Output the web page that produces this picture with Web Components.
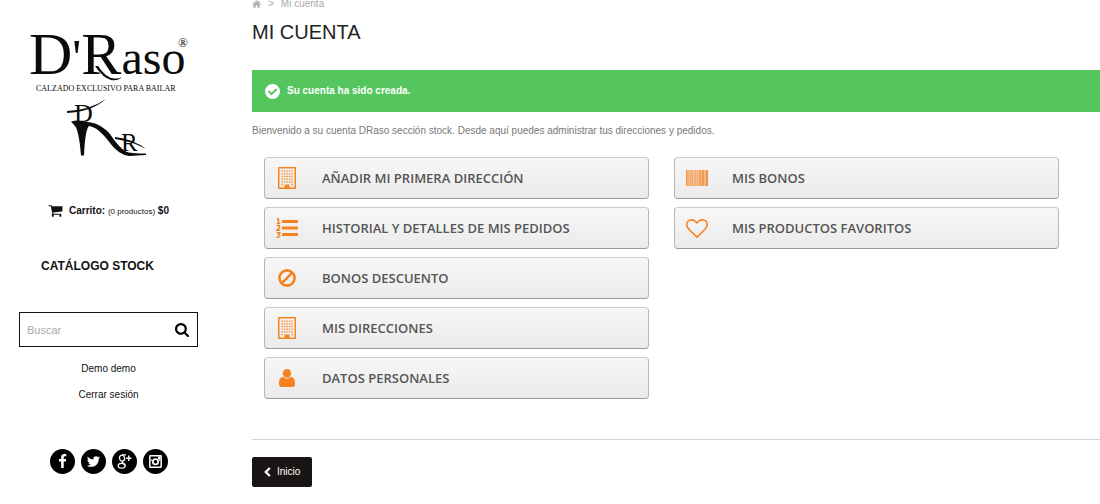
<!DOCTYPE html>
<html lang="es">
<head>
<meta charset="utf-8">
<meta name="viewport" content="width=device-width, initial-scale=1">
<title>Mi cuenta - D'Raso</title>
<style>
body { margin: 0; background: #fff; color: #777; font: 10px/16px "Liberation Sans", Arial, sans-serif; }
</style>
</head>
<body>
<account-page></account-page>
<script>
const define = (name, html, setup) => customElements.define(name, class extends HTMLElement {
  constructor() {
    super();
    this.attachShadow({ mode: 'open' }).innerHTML = html;
  }
  connectedCallback() { if (setup) setup(this, this.shadowRoot); }
});

let windows = '';
for (let y = 0; y < 6; y++) for (let x = 0; x < 5; x++) {
  if (y < 5 || x === 0 || x === 4) windows += `<rect x="${3.4 + x * 2.5}" y="${3.4 + y * 2.7}" width="1.3" height="1.4"/>`;
}
const ICONS = {
  home: ['0 0 20 18', '<path d="M10 4 3 10v6.500q0 .8.8.8H8V12h4v5.300h4.200q.8 0 .8-.8V10Z"/><path d="M10 .8 17 7V2h-2.500v2.500L11 1.200q-1-.8-2 0L0 9.300l1.200 1.300L10 3l8.800 7.600L20 9.300 17 6.600"/>'],
  cart: ['0 128 1792 1536', '<path d="M704 1536q0 52-38 90t-90 38-90-38-38-90 38-90 90-38 90 38 38 90zm896 0q0 52-38 90t-90 38-90-38-38-90 38-90 90-38 90 38 38 90zm128-1088v512q0 24-16.500 42.500t-40.500 21.500l-1044 122q13 60 13 70 0 16-24 64h920q26 0 45 19t19 45-19 45-45 19h-1024q-26 0-45-19t-19-45q0-11 8-31.500t16-36 21.500-40 15.500-29.500l-177-823h-204q-26 0-45-19t-19-45 19-45 45-19h256q16 0 28.500 6.500t19.500 15.500 13 24.500 8 26 5.500 29.500 4.500 26h1201q26 0 45 19t19 45z"/>'],
  search: ['64 128 1664 1664', '<path d="M1216 832q0-185-131.500-316.500t-316.500-131.500-316.500 131.500-131.500 316.500 131.500 316.500 316.500 131.500 316.500-131.500 131.500-316.500zm512 832q0 52-38 90t-90 38q-54 0-90-38l-343-342q-179 124-399 124-143 0-273.500-55.500t-225-150-150-225-55.500-273.500 55.500-273.500 150-225 225-150 273.500-55.500 273.500 55.500 225 150 150 225 55.500 273.500q0 220-124 399l343 343q37 37 37 90z"/>'],
  check: ['0 0 16 16', '<path fill-rule="evenodd" d="M8 0a8 8 0 1 1 0 16A8 8 0 0 1 8 0ZM4.400 6.600 2.900 8.100 7 12.200l6.200-6.200-1.500-1.500L7 9.200Z"/>'],
  building: ['0 0 18 22', `<path fill-rule="evenodd" d="M1 0h16q1 0 1 1v20q0 1-1 1H1q-1 0-1-1V1Q0 0 1 0Zm.5 1.500v19H6.500V17.500h5v3h5v-19Z"/>${windows}`],
  list: ['0 0 22 20', '<g fill="none" stroke="currentColor" stroke-width="1.400"><path d="M.8 1.800 2.500.8V5.500M.8 5.500H4.200M.7 8.200Q3.900 6.400 3.800 8.700 3.600 10 .8 12.300H4.200M.7 14.600H3.700L2.300 16.400Q4 16.600 3.600 18.200 2.800 19.900.5 18.900"/></g><rect x="6" y="2" width="16" height="3" rx=".6"/><rect x="6" y="8.500" width="16" height="3" rx=".6"/><rect x="6" y="15" width="16" height="3" rx=".6"/>'],
  ban: ['0 0 18 18', '<g fill="none" stroke="currentColor" stroke-width="2.600"><circle cx="9" cy="9" r="7.600"/><path d="m3.700 14.300 10.600-10.600"/></g>'],
  user: ['0 0 17 19', '<ellipse cx="8.500" cy="4.600" rx="4.400" ry="4.600"/><path d="M4.300 8.300Q6 10.200 8.500 10.200T12.700 8.300Q17 9 17 15.500 17 19 13.800 19H3.200Q0 19 0 15.500 0 9 4.300 8.300Z"/>'],
  barcode: ['0 0 22 16', '<g opacity=".85"><path d="M0 0h1.500v16H0zM2.200 0h.5v16h-.5zM13 0h.8v16H13zM14.300 0h1v16h-1zM16 0h1.800v16H16zM18.600 0h.7v16h-.7zM20 0h2v16h-2z"/><path opacity=".65" d="M3.600 0h1.500v16H3.600zM5.600 0H7v16H5.600zM7.600 0h.8v16h-.8zM9 0h1.400v16H9zM11 0h1.200v16H11z"/><path opacity=".35" d="M0 0h22v16H0z"/></g>'],
  heart: ['0 128 1792 1536', '<path d="M1664 596q0-81-21.500-143t-55-98.500-81.500-59.500-94-31-98-8-112 25.500-110.500 64-86.500 72-60 61.500q-18 22-49 22t-49-22q-24-28-60-61.500t-86.500-72-110.500-64-112-25.500-98 8-94 31-81.500 59.500-55 98.500-21.500 143q0 168 187 355l581 560 580-559q188-188 188-356zm128 0q0 221-229 450l-623 600q-18 18-44 18t-44-18l-624-602q-10-8-27.500-26t-55.500-65.500-68-97.500-53.500-121-23.500-138q0-220 127-344t351-124q62 0 126.500 21.500t120 58 95.500 68.500 76 68q36-36 76-68t95.500-68.500 120-58 126.500-21.500q224 0 351 124t127 344z"/>'],
  left: ['0 0 7 10', '<path fill="none" stroke="currentColor" stroke-width="2.300" d="M5.800 1 1.800 5l4 4"/>'],
  facebook: ['0 0 1792 1792', '<path d="M1343 12v264h-157q-86 0-116 36t-30 108v189h293l-39 296h-254v759h-306v-759h-255v-296h255v-218q0-186 104-288.500t277-102.500q147 0 228 12z"/>'],
  twitter: ['0 0 1792 1792', '<path d="M1684 408q-67 98-162 167 1 14 1 42 0 130-38 259.500t-115.500 248.500-184.500 210.500-258 146-323 54.500q-271 0-496-145 35 4 78 4 225 0 401-138-105-2-188-64.500t-114-159.500q33 5 61 5 43 0 85-11-112-23-185.500-111.500t-73.500-205.500v-4q68 38 146 41-66-44-105-115t-39-154q0-88 44-163 121 149 294.500 238.500t371.500 99.500q-8-38-8-74 0-134 94.500-228.500t228.500-94.500q140 0 236 102 109-21 205-78-37 115-142 178 93-10 186-50z"/>'],
  google: ['0 0 15 15', '<g fill="none" stroke="currentColor"><ellipse cx="5" cy="4.200" rx="2.500" ry="3" stroke-width="1.300" transform="rotate(-15 5 4)"/><path d="M5 .9H9M5.800 7Q4.300 8.300 6.200 9.300 8.600 10.500 7.900 12.300" stroke-width="1.300"/><ellipse cx="4.600" cy="11.700" rx="3.500" ry="2.400" stroke-width="1.200"/><path d="M11.800 1.500v5.400M9.100 4.200h5.400" stroke-width="1.400"/></g>'],
  instagram: ['0 0 14 14', '<path fill-rule="evenodd" d="M2 1h10q1 0 1 1v10q0 1-1 1H2q-1 0-1-1V2Q1 1 2 1ZM2.400 2.400v9.200h9.200V2.400Z"/><path d="M9.300 2.400h2.300v2.500H9.300ZM2.400 5.200h1.500v1H2.400ZM10.200 5.200h1.400v1h-1.400Z"/><circle cx="7" cy="7.300" r="2.500" fill="none" stroke="currentColor" stroke-width="1.600"/>']
};

define('ui-icon', `<style>:host{display:inline-flex;flex:none;align-items:center;justify-content:center}svg{display:block;width:100%;height:100%;fill:currentColor}</style><svg aria-hidden="true"></svg>`, (el, root) => {
  const [box, shape] = ICONS[el.getAttribute('name')];
  const svg = root.querySelector('svg');
  svg.setAttribute('viewBox', box);
  svg.innerHTML = shape;
});

define('brand-logo', `<style>
:host{display:block}a{display:block;color:#0b0b0b}svg{display:block;margin:auto;fill:currentColor;font-family:"Liberation Serif",serif}
</style><a href="#" aria-label="D'Raso"><svg width="164" height="144" viewBox="27 16 164 144">
<text x="29" y="74" font-size="60">D<tspan font-size="50">'</tspan>R<tspan font-size="48">aso</tspan></text>
<text x="178" y="47" font-size="13">®</text>
<text x="36" y="91" font-size="8">CALZADO EXCLUSIVO PARA BAILAR</text>
<text x="74" y="122" font-size="26">D</text>
<text x="121" y="151" font-size="25">R</text>
<path d="M98 66Q106 78 114 78.500 119 79 122 77 118 81 111 80 103 78 95 66Z"/>
<path d="M67 111Q90 110 106 99 91 112 67 113Z"/>
<path d="M71 121.500 76 120.500 91 122.500Q101 124 110 134 119 148 126 151.500 130 153.500 146 153.500V155L129 156Q119 155 110 143 98 127 89 126 85 130 84 155.500H81Q79 131 75 126Z"/>
<path d="M115 137Q133 139 146 149 131 141 115 139Z"/>
</svg></a>`);

define('cart-summary', `<style>
:host{display:block}a{display:flex;align-items:center;justify-content:center;color:#111;text-decoration:none;font-size:10px;line-height:16px}
ui-icon{width:15px;height:13px;margin:0 6px 2px 0}small{font-size:8px}p{margin:0}
</style><a href="#"><ui-icon name="cart"></ui-icon><p><b>Carrito:</b> <small>(0 productos)</small> <b>$0</b></p></a>`);

define('search-box', `<style>
:host{display:block}form{display:flex;align-items:center;height:33px;border:1px solid #111;background:#fff;margin:0}
input{flex:1;min-width:0;border:0;outline:0;padding:0 7px;background:none;font:11px/16px "Liberation Sans",sans-serif;color:#333}
input::placeholder{color:#aaa;opacity:1}
button{border:0;background:none;padding:8px;margin:0;color:#000;display:flex}ui-icon{width:14px;height:14px}
</style><form role="search"><input type="text" placeholder="Buscar" aria-label="Buscar"><button type="button" aria-label="Buscar"><ui-icon name="search"></ui-icon></button></form>`);

define('social-links', `<style>
:host{display:flex;justify-content:center;gap:6px}a{display:flex;align-items:center;justify-content:center;width:25px;height:25px;border-radius:50%;background:#000;color:#fff}ui-icon{width:15px;height:15px}
</style><a href="#" aria-label="Facebook"><ui-icon name="facebook"></ui-icon></a><a href="#" aria-label="Twitter"><ui-icon name="twitter"></ui-icon></a><a href="#" aria-label="Google+"><ui-icon name="google"></ui-icon></a><a href="#" aria-label="Instagram"><ui-icon name="instagram"></ui-icon></a>`);

define('side-bar', `<style>
:host{display:block;padding:16px 19px 30px;box-sizing:border-box;text-align:center}
cart-summary{margin-top:43px}
nav a{display:block;color:#111;text-decoration:none;line-height:16px}
.catalog{margin:38px 0 38px;padding-right:22px;font-size:12px;font-weight:bold}
.user{display:grid;gap:10px;margin:14px 0 46px}
</style><brand-logo></brand-logo><cart-summary></cart-summary>
<nav class="catalog"><a href="#">CATÁLOGO STOCK</a></nav>
<search-box></search-box>
<nav class="user"><a href="#">Demo demo</a><a href="#">Cerrar sesión</a></nav>
<social-links></social-links>`);

define('bread-crumb', `<style>
:host{display:block}nav{display:flex;align-items:center;gap:7px;line-height:8px;height:8px;color:#aaa}a{color:#aaa;display:flex}ui-icon{width:9px;height:8px}
</style><nav aria-label="Ruta"><a href="#" aria-label="Inicio"><ui-icon name="home"></ui-icon></a><span>&gt;</span><span><slot></slot></span></nav>`);

define('success-alert', `<style>
:host{display:flex;align-items:center;gap:7px;min-height:42px;padding:0 13px;box-sizing:border-box;background:#55c65e;color:#fff;font-weight:bold}ui-icon{width:15px;height:15px}
</style><ui-icon name="check"></ui-icon><span><slot></slot></span>`);

define('account-link', `<style>
:host{display:block}
a{display:flex;align-items:center;height:42px;box-sizing:border-box;border:1px solid;border-color:#cacaca #b7b7b7 #9a9a9a #b7b7b7;border-radius:4px;background:linear-gradient(#f7f7f7,#ebebeb);color:#555;text-decoration:none;font:600 13px/20px "Open Sans",sans-serif}
.icon{width:43px;display:flex;justify-content:center;color:#f5821f;margin-right:14px}
ui-icon{width:22px;height:22px}
[name=list]{height:20px}[name=ban],[name=user]{width:18px;height:18px}[name=barcode]{height:16px}[name=heart]{height:19px}
</style><a href="#"><span class="icon"></span><span><slot></slot></span></a>`, (el, root) => {
  root.querySelector('.icon').innerHTML = `<ui-icon name="${el.getAttribute('icon')}"></ui-icon>`;
});

define('account-main', `<style>
:host{display:block;min-width:0}
h1{margin:12px 0 25px;font-size:20px;line-height:25px;font-weight:normal;color:#222}
p{margin:11px 0 18px;line-height:16px}
.lists{display:grid;grid-template-columns:1fr 1fr;gap:25px;margin:0 41px 0 12px}
ul{list-style:none;margin:0;padding:0;display:grid;gap:8px;align-content:start}
footer{margin-top:40px;padding:17px 0 18px;border-top:1px solid #d6d4d4}
.back{display:inline-flex;align-items:center;gap:6px;height:30px;padding:0 12px;box-sizing:border-box;border-radius:2px;background:#191515;color:#fff;text-decoration:none}
.back ui-icon{width:7px;height:10px}
</style><bread-crumb>Mi cuenta</bread-crumb>
<h1>MI CUENTA</h1>
<success-alert role="status">Su cuenta ha sido creada.</success-alert>
<p>Bienvenido a su cuenta DRaso sección stock. Desde aquí puedes administrar tus direcciones y pedidos.</p>
<div class="lists">
<ul>
<li><account-link icon="building">AÑADIR MI PRIMERA DIRECCIÓN</account-link></li>
<li><account-link icon="list">HISTORIAL Y DETALLES DE MIS PEDIDOS</account-link></li>
<li><account-link icon="ban">BONOS DESCUENTO</account-link></li>
<li><account-link icon="building">MIS DIRECCIONES</account-link></li>
<li><account-link icon="user">DATOS PERSONALES</account-link></li>
</ul>
<ul>
<li><account-link icon="barcode">MIS BONOS</account-link></li>
<li><account-link icon="heart">MIS PRODUCTOS FAVORITOS</account-link></li>
</ul>
</div>
<footer><a class="back" href="#"><ui-icon name="left"></ui-icon>Inicio</a></footer>`);

define('account-page', `<style>
:host{display:grid;grid-template-columns:217px minmax(0,1fr);gap:35px;align-items:start}
</style><side-bar></side-bar><account-main role="main"></account-main>`);
</script>
</body>
</html>
